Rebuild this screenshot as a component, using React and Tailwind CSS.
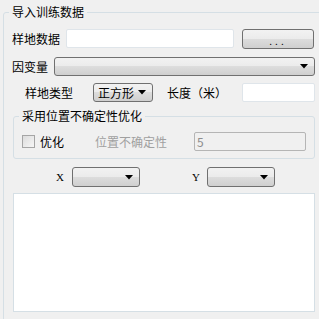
function Arrow() {
  return (
    <svg width="8" height="5" viewBox="0 0 8 5" className="shrink-0">
      <path d="M0 0h8L4 4.5z" fill="#000" />
    </svg>
  );
}

function Combo({ w, children }) {
  return (
    <div
      className={`${w} flex h-full items-center justify-between rounded-[3px] border border-[#707070] bg-[linear-gradient(#f2f2f2_0%,#ebebeb_50%,#dddddd_50%,#cfcfcf_100%)] pl-[4px] pr-[6px]`}
    >
      <span className="leading-none">{children}</span>
      <Arrow />
    </div>
  );
}

function TextBox({ w, children, disabled = false }) {
  return (
    <div
      className={`${w} flex h-full items-center rounded-[2px] border px-[2px] ${
        disabled
          ? "border-[#b5b5b5] bg-[#f0f0f0] text-[#8d8d8d]"
          : "border-[#dfe5ea] bg-white"
      }`}
    >
      {children}
    </div>
  );
}

export default function App() {
  return (
    <div className="h-[319px] w-[319px] overflow-hidden bg-[#f0f0f0] text-[12px] text-black [font-family:'Noto_Sans_CJK_SC',sans-serif]">
      <fieldset className="ml-[3px] mt-[4px] h-[340px] w-[330px] rounded-tl-[3px] border border-[#d5dfe5]">
        <legend className="ml-[5px] h-[16px] px-[3px] leading-[16px]">导入训练数据</legend>

        <div className="pl-[8px]">
          {/* 样地数据 */}
          <div className="mt-[9px] flex h-[20px] items-center">
            <span className="w-[54px]">样地数据</span>
            <div className="h-[19px] self-start">
              <TextBox w="w-[168px]" />
            </div>
            <button className="ml-[8px] flex h-[20px] w-[72px] items-center justify-center rounded-[3px] border border-[#707070] bg-[linear-gradient(#f2f2f2_0%,#ebebeb_50%,#dddddd_50%,#cfcfcf_100%)] pt-[3px] text-[10px] tracking-[3px]">
              ...
            </button>
          </div>

          {/* 因变量 */}
          <div className="mt-[8px] flex h-[19px] items-center">
            <span className="w-[42px]">因变量</span>
            <Combo w="w-[261px]" />
          </div>

          {/* 样地类型 / 长度 */}
          <div className="mt-[7px] flex h-[19px] items-center pl-[13px]">
            <span className="w-[68px]">样地类型</span>
            <Combo w="w-[60px]">正方形</Combo>
            <span className="ml-[14px] w-[75px]">长度（米）</span>
            <TextBox w="w-[73px]" />
          </div>

          {/* 采用位置不确定性优化 */}
          <fieldset className="ml-[1px] mt-[6px] w-[302px] rounded-[3px] border border-[#d5dfe5] pb-[7px]">
            <legend className="ml-[5px] h-[16px] px-[3px] leading-[16px]">采用位置不确定性优化</legend>
            <div className="mt-[8px] flex h-[19px] items-center pl-[8px]">
              <span className="h-[13px] w-[13px] border border-[#a5a5a5] bg-[linear-gradient(135deg,#dcdcdc,#f6f6f6)]" />
              <span className="ml-[5px] w-[55px]">优化</span>
              <span className="w-[99px] text-[#a0a0a0]">位置不确定性</span>
              <TextBox w="w-[112px]" disabled>
                5
              </TextBox>
            </div>
          </fieldset>

          {/* X / Y */}
          <div className="mt-[8px] flex h-[20px] items-center">
            <span className="ml-[44px] w-[16px] text-[11px] [font-family:'Liberation_Serif',serif]">X</span>
            <Combo w="w-[68px]" />
            <span className="ml-[52px] w-[15px] text-[11px] [font-family:'Liberation_Serif',serif]">Y</span>
            <Combo w="w-[68px]" />
          </div>

          <div className="ml-[1px] mt-[6px] h-[119px] w-[302px] border border-[#d5dfe5] bg-white" />
        </div>
      </fieldset>
    </div>
  );
}
